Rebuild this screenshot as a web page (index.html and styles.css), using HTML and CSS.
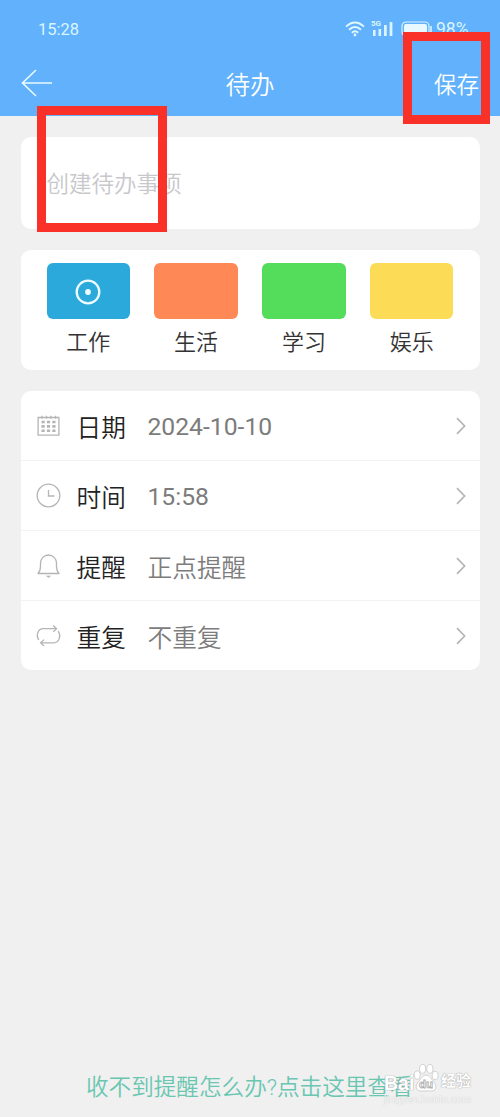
FILE: index.html
```html
<!DOCTYPE html>
<html lang="zh-CN">
<head>
    <meta charset="UTF-8">
    <title>待办</title>
    <link rel="stylesheet" href="styles.css">
</head>
<body>
<div class="page">
    <div class="header">
        <div class="status">
            <span class="clock">15:28</span>
            <svg class="wifi" width="20" height="16" viewBox="0 0 20 16" fill="none" stroke="#e4f8ff" stroke-width="1.9">
                <path d="M1 5.6Q10-2.6 19 5.6M4 8.8Q10 3.2 16 8.8M6.8 11.7Q10 8.9 13.2 11.7"/>
                <circle cx="10" cy="14" r="1.4" fill="#e4f8ff" stroke="none"/>
            </svg>
            <div class="signal">
                <span>5G</span>
                <svg width="23" height="16" viewBox="0 0 23 16" fill="#d9f3ff">
                    <path d="M2 9h2.6v6H2zM7.5 8h2.6v7H7.5zM13 4h2.8v11H13zM18.6 1h2.8v14h-2.8z"/>
                </svg>
            </div>
            <svg class="battery" width="32" height="16" viewBox="0 0 32 16">
                <rect x="1" y="1" width="27" height="14" rx="4" fill="none" stroke="#d9f3ff" stroke-width="1.2"/>
                <rect x="3" y="3" width="23" height="10" rx="2" fill="#e9f9ff"/>
                <path d="M30 5v6" stroke="#d9f3ff" stroke-width="1.6"/>
            </svg>
            <span class="percent">98%</span>
        </div>
        <div class="nav">
            <svg class="back" width="32" height="28" viewBox="0 0 32 28" fill="none" stroke="#e9fbff" stroke-width="1.6">
                <path d="M31 14H1.5M15 1L1.5 14L15 27"/>
            </svg>
            <h1>待办</h1>
            <a class="save" href="#">保存</a>
        </div>
    </div>

    <div class="card todo">创建待办事项</div>

    <ul class="card types">
        <li>
            <div class="color work">
                <svg width="26" height="26" viewBox="0 0 26 26">
                    <circle cx="13" cy="13" r="11.3" fill="none" stroke="#eefcff" stroke-width="2.3"/>
                    <circle cx="13" cy="13" r="2.9" fill="#eefcff"/>
                </svg>
            </div>
            <p>工作</p>
        </li>
        <li><div class="color life"></div><p>生活</p></li>
        <li><div class="color study"></div><p>学习</p></li>
        <li><div class="color fun"></div><p>娱乐</p></li>
    </ul>

    <ul class="card options">
        <li>
            <svg class="icon" width="26" height="26" viewBox="0 0 26 26">
                <path d="M2.1 4.5h20.8v17.6H2.1z"/>
                <path d="M6 2.8v3M10.5 2.8v3M15 2.8v3M19.5 2.8v3"/>
                <path d="M5.5 9h3.2M10.9 9h3.2M16.3 9h3.2M5.5 13.4h3.2M10.9 13.4h3.2M16.3 13.4h3.2M5.5 17.8h3.2M10.9 17.8h3.2M16.3 17.8h3.2" stroke-width="2.6"/>
            </svg>
            <span class="label">日期</span>
            <span class="value num">2024-10-10</span>
            <svg class="arrow" width="10" height="18" viewBox="0 0 10 18"><path d="M1 1.2L8.6 9L1 16.8"/></svg>
        </li>
        <li>
            <svg class="icon" width="26" height="26" viewBox="0 0 26 26">
                <circle cx="12.5" cy="12.5" r="11.3"/>
                <path d="M12.5 7v6h6"/>
            </svg>
            <span class="label">时间</span>
            <span class="value num">15:58</span>
            <svg class="arrow" width="10" height="18" viewBox="0 0 10 18"><path d="M1 1.2L8.6 9L1 16.8"/></svg>
        </li>
        <li>
            <svg class="icon" width="26" height="26" viewBox="0 0 26 26">
                <path d="M2 20.5c2-2 2.5-4 2.5-7.5V10a8 8 0 0 1 16 0v3c0 3.5.5 5.5 2.5 7.5z" stroke-linejoin="round"/>
                <path d="M10.5 23h4l-2 1.6z" fill="#b5b5b5" stroke-width=".6"/>
            </svg>
            <span class="label">提醒</span>
            <span class="value">正点提醒</span>
            <svg class="arrow" width="10" height="18" viewBox="0 0 10 18"><path d="M1 1.2L8.6 9L1 16.8"/></svg>
        </li>
        <li>
            <svg class="icon" width="26" height="26" viewBox="0 0 26 26">
                <path d="M2.8 17C-.2 12.5 1.5 5.7 7.5 5.7H20.5M17.2 2.5l3.4 3.2l-3.4 3.2"/>
                <path d="M22.2 8c3 4.5 1.3 11.8-4.7 11.8H5M8 16.6l-3.4 3.2L8 23"/>
            </svg>
            <span class="label">重复</span>
            <span class="value">不重复</span>
            <svg class="arrow" width="10" height="18" viewBox="0 0 10 18"><path d="M1 1.2L8.6 9L1 16.8"/></svg>
        </li>
    </ul>

    <a class="help" href="#">收不到提醒怎么办?点击这里查看</a>

    <!--标记框-->
    <div class="mark mark-input"></div>
    <div class="mark mark-save"></div>

    <!--水印-->
    <div class="watermark">
        <div class="brand">
            <span class="bai">Bai</span>
            <svg width="26" height="30" viewBox="0 0 27 30" fill="#fff" stroke="#c4c4c4" stroke-width=".8">
                <ellipse cx="4.3" cy="12" rx="3.1" ry="4.3"/>
                <ellipse cx="10" cy="5.5" rx="3.2" ry="4.6"/>
                <ellipse cx="17.5" cy="5.5" rx="3.2" ry="4.6"/>
                <ellipse cx="23" cy="12.5" rx="3.1" ry="4.3"/>
                <path d="M13.5 12c4 0 5 4 8 7s3.5 9-2 9.5h-12c-5.5-.5-5-6.5-2-9.5s4-7 8-7z"/>
                <text x="13.5" y="25.5" text-anchor="middle">du</text>
            </svg>
            <span class="cn">经验</span>
        </div>
        <div class="site">jingyan.baidu.com</div>
    </div>
</div>
</body>
</html>
```
FILE: styles.css
```css
* {
    margin: 0;
    padding: 0;
    box-sizing: border-box;
}

body {
    font-family: Roboto, "Noto Sans CJK SC", sans-serif;
    font-weight: 350;
    background-color: #f0f0f0;
}

ul {
    list-style: none;
}

a {
    text-decoration: none;
}

svg {
    display: block;
    flex-shrink: 0;
}

.page {
    position: relative;
    display: flex;
    flex-direction: column;
    width: 500px;
    height: 1117px;
    overflow: hidden;
}

.header {
    height: 116px;
    background-color: #61b1fc;
    color: #fff;
}

.status {
    display: flex;
    align-items: center;
    height: 58px;
    padding: 0 30px 0 38px;
    font-size: 16.5px;
    font-weight: 400;
    color: #d9f6ff;
}

.clock {
    margin-right: auto;
}

.wifi {
    margin-right: 6px;
}

.signal {
    position: relative;
    margin-right: 7px;
}

.signal span {
    position: absolute;
    top: -1px;
    left: 0;
    font-size: 8px;
    line-height: 8px;
    font-weight: 700;
}

.battery {
    margin-right: 3px;
}

.percent {
    width: 34px;
    font-size: 17.5px;
}

.nav {
    display: grid;
    grid-template-columns: 100px 1fr 100px;
    align-items: center;
    height: 50px;
    padding: 0 21px;
}

.nav h1 {
    font-size: 24.5px;
    font-weight: 350;
    text-align: center;
}

.save {
    font-size: 22.5px;
    text-align: right;
    color: #fff;
}

.card {
    margin: 21px 20.5px 0;
    border-radius: 10px;
    background-color: #fff;
}

.todo {
    height: 92px;
    padding: 1px 0 0 26px;
    font-size: 22.5px;
    line-height: 93px;
    color: #c8c8cc;
}

.types {
    display: flex;
    justify-content: space-between;
    height: 120px;
    padding: 13px 26px 0;
    text-align: center;
    font-size: 22px;
    line-height: 32px;
    color: #333;
}

.types p {
    margin-top: 8px;
}

.color {
    display: flex;
    align-items: center;
    justify-content: center;
    width: 83.5px;
    height: 56px;
    border-radius: 6px;
}

.work {
    padding-top: 2px;
    background-color: #2ba9da;
}

.life {
    background-color: #ff8956;
}

.study {
    background-color: #54dc5b;
}

.fun {
    background-color: #fcdc57;
}

.options {
    height: 279px;
    font-size: 24.7px;
    color: #7c7c7c;
}

.options li {
    display: flex;
    align-items: center;
    height: 70px;
    padding: 0 13px 0 15px;
    border-bottom: 1px solid #f3f3f3;
}

.options li:last-child {
    height: 69px;
    border-bottom: none;
}

.icon {
    fill: none;
    stroke: #b5b5b5;
    stroke-width: 1.3;
}

.label {
    width: 71px;
    margin-left: 15px;
    padding-top: 1px;
    color: #222;
}

.value {
    flex: 1;
    padding-top: 1px;
}

.num {
    font-weight: 400;
}

.arrow {
    margin-right: 1px;
    fill: none;
    stroke: #b5b5b5;
    stroke-width: 1.7;
}

.help {
    margin: auto 0 13px 86px;
    font-size: 22.6px;
    line-height: 32px;
    color: #6ac6b0;
}

.mark {
    position: absolute;
    border: 9px solid #f93128;
}

.mark-input {
    top: 106px;
    left: 37px;
    width: 130px;
    height: 126px;
}

.mark-save {
    top: 32px;
    left: 403px;
    width: 87px;
    height: 92px;
}

.watermark {
    position: absolute;
    top: 1063px;
    left: 384px;
    color: #fff;
}

.brand {
    display: flex;
    align-items: flex-end;
    height: 30px;
    font: 700 20px/24px "Liberation Sans", "Noto Sans CJK SC", sans-serif;
    text-shadow: 0 0 1px #999, 0 0 1px #aaa;
}

.brand svg {
    margin-right: 2px;
}

.brand text {
    font-size: 12px;
    fill: #fff;
    stroke: #aaa;
    text-shadow: none;
}

.bai {
    width: 29px;
    font-size: 19.5px;
    line-height: 20px;
}

.brand .cn {
    font-size: 15px;
}

.site {
    font: 10.8px/13px "Liberation Sans", sans-serif;
    color: #f7f7f7;
    text-shadow: 0 0 1px #bbb;
}
```
